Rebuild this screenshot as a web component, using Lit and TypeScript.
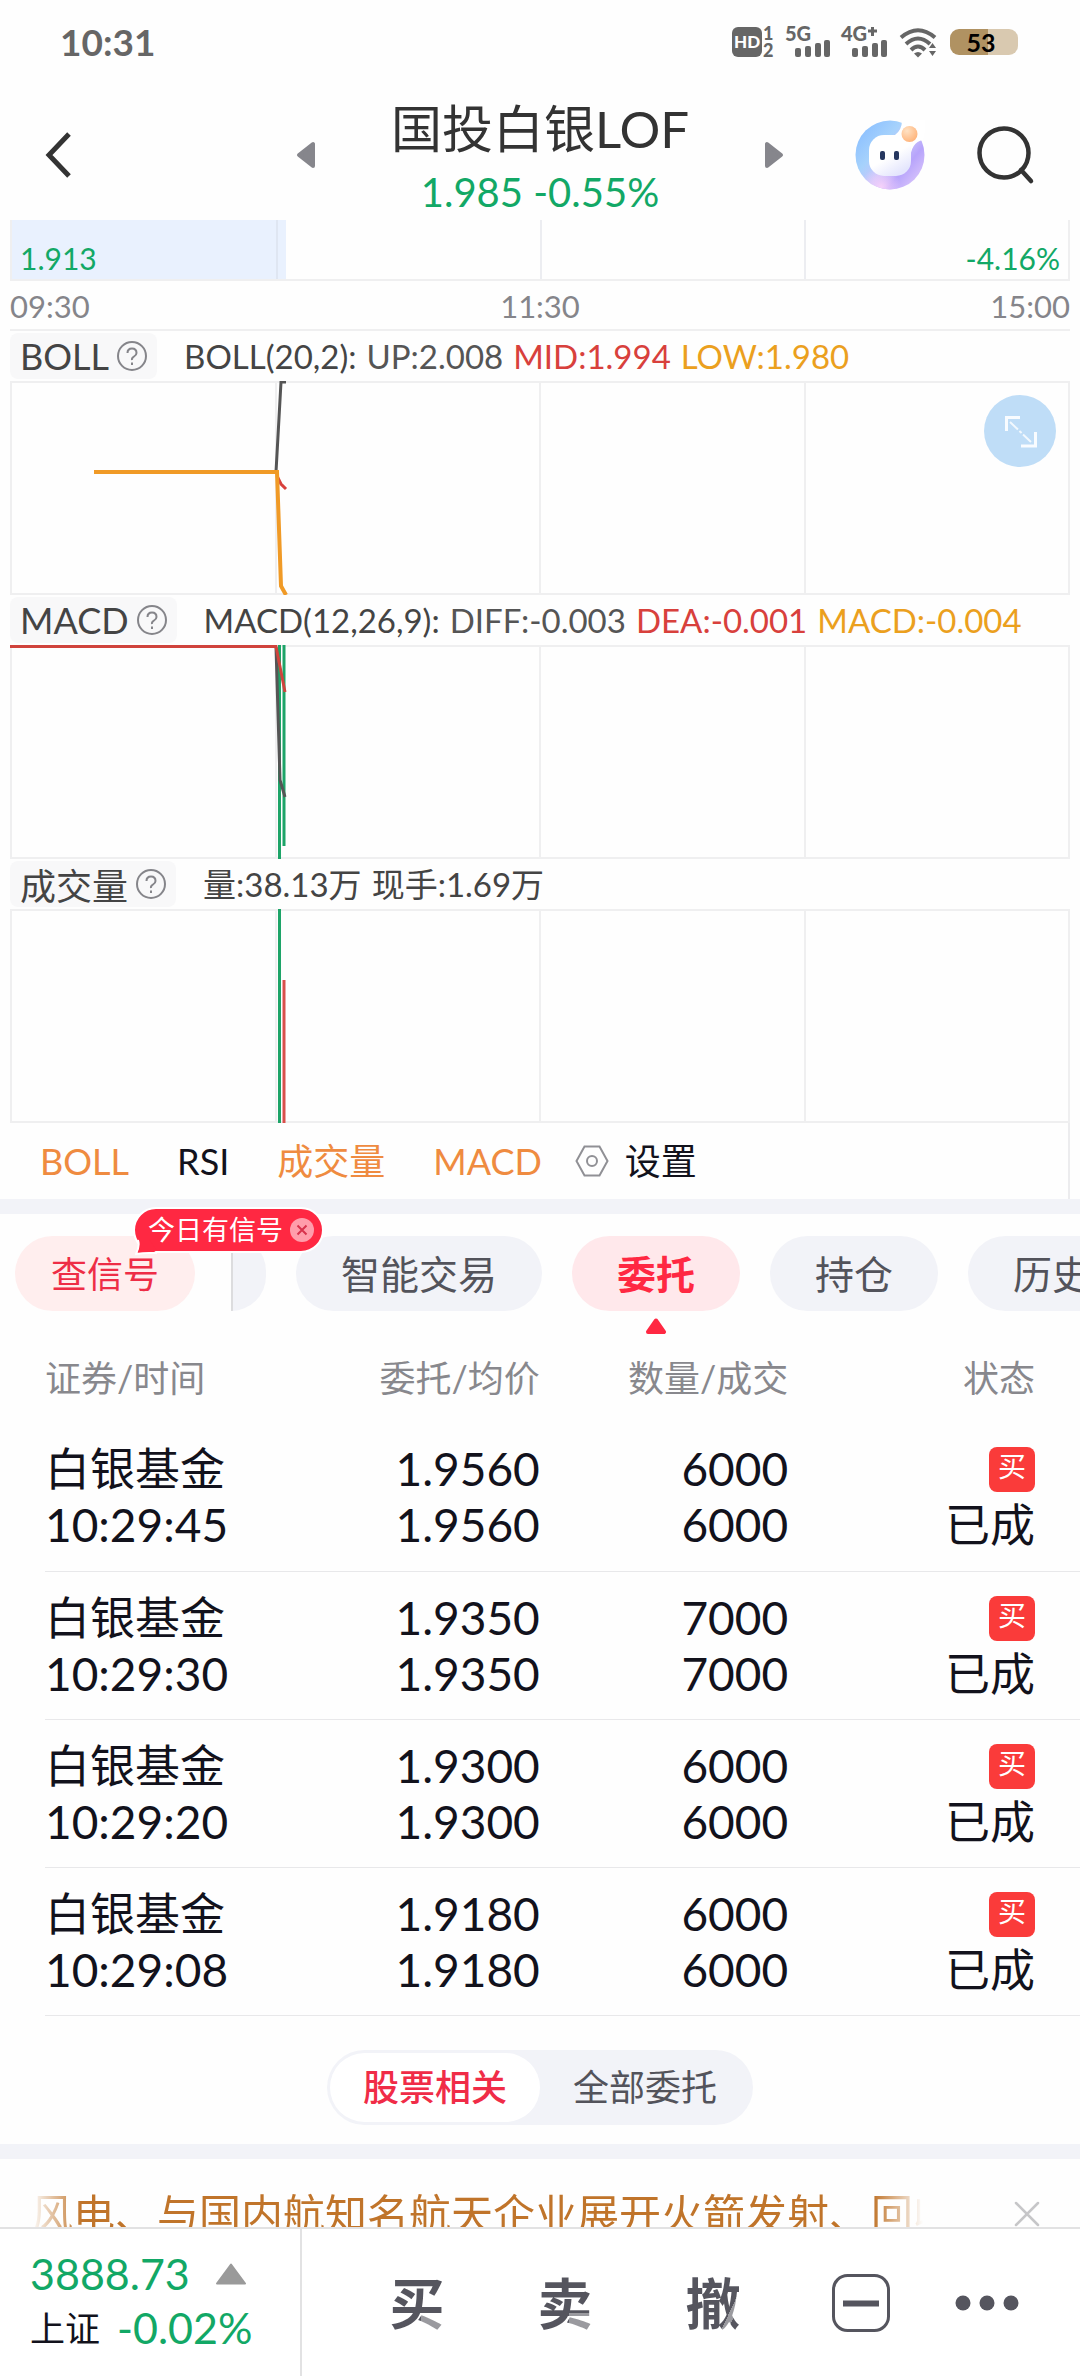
import { LitElement, html, svg, css } from "lit";
import { customElement, property, state } from "lit/decorators.js";
import { classMap } from "lit/directives/class-map.js";

const base = css`
  * {
    box-sizing: border-box;
  }
  button {
    margin: 0;
    padding: 0;
    border: 0;
    background: none;
    color: inherit;
    font: inherit;
    line-height: inherit;
    white-space: nowrap;
    cursor: pointer;
  }
  svg {
    display: block;
    flex: none;
  }
`;

@customElement("status-bar")
class StatusBar extends LitElement {
  static styles = [
    base,
    css`
      :host {
        display: flex;
        align-items: center;
        justify-content: space-between;
        height: 88px;
        padding: 0 62px 4px 60px;
        color: #666;
      }
      .time {
        font-size: 37px;
        font-weight: 700;
        line-height: 48px;
      }
      .icons {
        display: flex;
        align-items: center;
      }
      .battery {
        display: flex;
        align-items: center;
        justify-content: center;
        width: 68px;
        height: 26px;
        margin-left: 12px;
        padding-right: 6px;
        border-radius: 9px;
        background: linear-gradient(90deg, #b09262 56%, #d9c9b0 56%);
        color: #000;
        font-size: 25px;
        font-weight: 700;
        line-height: 26px;
      }
      text {
        font-weight: 900;
        font-size: 20px;
        fill: #666;
      }
      .hd {
        fill: #fff;
        font-size: 17px;
      }
      .sim {
        font-size: 18px;
      }
    `,
  ];

  bars(x: number) {
    return svg`
      <rect x=${x} y="22" width="6" height="9" rx="2" />
      <rect x=${x + 10} y="20" width="6" height="11" rx="2" />
      <rect x=${x + 20} y="17" width="6" height="14" rx="2" />
      <rect x=${x + 29} y="14" width="6" height="17" rx="2" />`;
  }

  render() {
    return html`
      <span class="time">10:31</span>
      <div class="icons">
        <svg width="206" height="48" viewBox="0 -8 206 48" fill="#666" role="img" aria-label="信号">
          <rect x="0" y="1" width="30" height="30" rx="6" />
          <text class="hd" x="2" y="22">HD</text>
          <text class="sim" x="31" y="14">1</text>
          <text class="sim" x="31" y="31">2</text>
          <text x="53" y="15">5G</text>
          ${this.bars(63)}
          <text x="109" y="15">4G</text>
          <path d="M136 5h9M140.500 1v9" stroke="#666" stroke-width="3" />
          ${this.bars(120)}
          <g fill="none" stroke="#666" stroke-width="4">
            <path d="M169 11.500Q186 -3 203 11.500" />
            <path d="M174 18Q186 7 198 18" />
            <path d="M179 24Q186 17 193 24" />
          </g>
          <path d="M182 27.500q4-3 8 0l-4 4zM197 22l3.500-5l3.500 5zM197 25l3.500 5l3.500-5z" />
        </svg>
        <span class="battery">53</span>
      </div>
    `;
  }
}

@customElement("quote-header")
class QuoteHeader extends LitElement {
  static styles = [
    base,
    css`
      :host {
        display: grid;
        grid-template-columns: 1fr minmax(0, 488px) 1fr;
        align-items: center;
        height: 132px;
        color: #333;
      }
      .back {
        justify-self: start;
        padding: 10px 24px 10px 44px;
      }
      .switcher {
        display: flex;
        align-items: center;
        justify-content: space-between;
      }
      .quote {
        padding-top: 8px;
        text-align: center;
        white-space: nowrap;
      }
      .name {
        margin: 0;
        font-size: 51px;
        font-weight: 400;
        line-height: 66px;
      }
      .price {
        color: #12a866;
        font-size: 40px;
        line-height: 60px;
      }
      .tools {
        display: flex;
        align-items: center;
        justify-content: flex-end;
        gap: 52px;
        padding-right: 45px;
      }
    `,
  ];

  render() {
    return html`
      <button class="back" aria-label="返回">
        <svg width="28" height="46" viewBox="0 0 28 46" fill="none" stroke="#333" stroke-width="5">
          <path d="M25 2L5 23L25 44" />
        </svg>
      </button>
      <div class="switcher">
        <button aria-label="上一只">
          <svg width="20" height="28" viewBox="0 0 20 28" fill="#86868c" stroke="#86868c" stroke-width="4" stroke-linejoin="round">
            <path d="M3 14L17 3V25Z" />
          </svg>
        </button>
        <div class="quote">
          <h1 class="name">国投白银LOF</h1>
          <div class="price">1.985 -0.55%</div>
        </div>
        <button aria-label="下一只">
          <svg width="20" height="28" viewBox="0 0 20 28" fill="#86868c" stroke="#86868c" stroke-width="4" stroke-linejoin="round">
            <path d="M17 14L3 3V25Z" />
          </svg>
        </button>
      </div>
      <div class="tools">
        <button aria-label="智能助手">
          <svg width="70" height="70" viewBox="0 0 70 70">
            <defs>
              <linearGradient id="ring" x1="0.100" y1="0.100" x2="0.900" y2="0.800">
                <stop offset="0" stop-color="#8cc0ff" />
                <stop offset="0.350" stop-color="#a6d2fc" />
                <stop offset="0.600" stop-color="#c9c4fb" />
                <stop offset="0.800" stop-color="#b7a4fb" />
                <stop offset="1" stop-color="#d0bcfb" />
              </linearGradient>
              <radialGradient id="glow">
                <stop offset="0" stop-color="#f6d2fa" />
                <stop offset="1" stop-color="#f6d2fa" stop-opacity="0" />
              </radialGradient>
              <radialGradient id="ball" cx="0.350" cy="0.300" r="0.800">
                <stop offset="0" stop-color="#ffe2c4" />
                <stop offset="1" stop-color="#ffb074" />
              </radialGradient>
              <linearGradient id="face" x1="0" y1="0" x2="0.600" y2="1">
                <stop offset="0.600" stop-color="#fff" />
                <stop offset="1" stop-color="#e4e6fd" />
              </linearGradient>
              <clipPath id="disc"><circle cx="35" cy="35" r="34.500" /></clipPath>
            </defs>
            <circle cx="35" cy="35" r="34.500" fill="url(#ring)" />
            <circle cx="26" cy="67" r="20" fill="url(#glow)" clip-path="url(#disc)" />
            <path d="M47 0Q47 10 40 15H30L55 32V40Q56 22 68 20L72 0Z" fill="#fff" />
            <rect x="14" y="15" width="42" height="41" rx="15" fill="url(#face)" />
            <rect x="25" y="31" width="5" height="9" rx="2" fill="#26375f" />
            <rect x="39" y="31" width="5" height="9" rx="2" fill="#26375f" />
            <circle cx="54.500" cy="14" r="8" fill="url(#ball)" />
          </svg>
        </button>
        <button aria-label="搜索">
          <svg width="58" height="60" viewBox="0 0 58 60" fill="none" stroke="#333" stroke-width="4.500" stroke-linecap="round">
            <circle cx="27" cy="28" r="24.500" />
            <path d="M44 45L54 56" />
          </svg>
        </button>
      </div>
    `;
  }
}

type Legend = { text: string; tone: string };

@customElement("indicator-panel")
class IndicatorPanel extends LitElement {
  @property() label = "";
  @property({ attribute: false }) legend: Legend[] = [];
  @property({ attribute: false }) plot: unknown = null;
  @property({ type: Boolean }) expandable = false;

  static styles = [
    base,
    css`
      :host {
        display: block;
      }
      .head {
        display: flex;
        align-items: center;
        gap: 27px;
        height: 50px;
        white-space: nowrap;
      }
      .label {
        display: flex;
        align-items: center;
        gap: 8px;
        height: 46px;
        padding: 0 10px;
        border-radius: 8px;
        background: #f8f8f9;
        color: #444;
        font-size: 36px;
      }
      .legend {
        display: flex;
        gap: 10px;
        color: #444;
        font-size: 33px;
        line-height: 48px;
      }
      .up {
        color: #555;
      }
      .red {
        color: #d8403c;
      }
      .gold {
        color: #eba01e;
      }
      .frame {
        position: relative;
        height: 214px;
        border: 2px solid #efeff0;
      }
      .plot {
        position: absolute;
        inset: -2px;
        width: calc(100% + 4px);
        height: 214px;
      }
      .expand {
        position: absolute;
        top: 12px;
        right: 12px;
      }
    `,
  ];

  render() {
    return html`
      <div class="head">
        <button class="label">
          ${this.label}
          <svg width="30" height="30" viewBox="0 0 30 30" fill="none" stroke="#85858a" stroke-width="2">
            <circle cx="15" cy="15" r="14" />
            <path d="M10.500 12Q10.500 7.500 15 7.500T19.500 12Q19.500 14 17 15.500T15 19" />
            <path d="M15 21.500v2.500" />
          </svg>
        </button>
        <div class="legend">
          ${this.legend.map((l) => html`<span class=${l.tone}>${l.text}</span>`)}
        </div>
      </div>
      <div class="frame">
        <svg class="plot" viewBox="0 0 1060 214" preserveAspectRatio="none" fill="none">
          <path d="M266 0V214M530 0V214M795 0V214" stroke="#efeff0" stroke-width="2" />
          ${this.plot}
        </svg>
        ${this.expandable
          ? html`<button class="expand" aria-label="全屏">
              <svg width="72" height="72" viewBox="0 0 72 72" fill="none" stroke="#fff">
                <circle cx="36" cy="36" r="36" fill="#bfddf7" stroke="none" />
                <path d="M22.500 36V22.500H36M37 51H51.500V37" stroke-width="3" opacity="0.900" />
                <path d="M26 27L47 47" stroke-width="2" stroke-dasharray="11 2 3 2" opacity="0.800" />
              </svg>
            </button>`
          : null}
      </div>
    `;
  }
}

const bollPlot = svg`
  <path d="M266 91L271 1H276" stroke="#555" stroke-width="3" />
  <path d="M267 95L271 103L276 108" stroke="#d8403c" stroke-width="3" />
  <path d="M84 91H267L271 205L276 214" stroke="#f09a26" stroke-width="4" />`;

const macdPlot = svg`
  <path d="M269.500 0V214M274 0V201" stroke="#1da468" stroke-width="3" />
  <path d="M266 2L270 135L275 152" stroke="#555" stroke-width="3" />
  <path d="M0 1.500H266L275 47" stroke="#d0433c" stroke-width="3" />`;

const volumePlot = svg`
  <path d="M269.500 0V214" stroke="#1da468" stroke-width="3" />
  <path d="M274 71V214" stroke="#d8504c" stroke-width="3" />`;

@customElement("chart-section")
class ChartSection extends LitElement {
  @state() active = new Set(["BOLL", "成交量", "MACD"]);

  static styles = [
    base,
    css`
      :host {
        display: block;
        padding: 0 10px;
      }
      .trend {
        display: grid;
        grid-template-columns: repeat(4, 1fr);
        height: 61px;
        border: 2px solid #efeff0;
        border-top: 0;
        background: linear-gradient(90deg, #e9f1fe 274px, transparent 274px);
        color: #12a866;
        font-size: 30px;
        line-height: 36px;
      }
      .trend span {
        display: flex;
        align-items: flex-end;
        padding: 0 8px 3px;
      }
      .trend span + span {
        border-left: 2px solid #ecedf1;
      }
      .trend span:nth-child(2) {
        border-left-color: #dfe6f2;
      }
      .trend .low {
        justify-content: flex-end;
      }
      .axis {
        display: flex;
        justify-content: space-between;
        height: 50px;
        border-bottom: 2px solid #efeff0;
        color: #85858a;
        font-size: 31px;
        line-height: 50px;
      }
      .switches {
        display: flex;
        align-items: center;
        gap: 48px;
        height: 76px;
        padding-left: 30px;
        border-right: 2px solid #ececee;
        color: #12121c;
        font-size: 36px;
        line-height: 48px;
      }
      .on {
        color: #ef8b40;
      }
      .settings {
        display: flex;
        align-items: center;
        gap: 16px;
      }
      .tail {
        display: flex;
        gap: 33px;
      }
    `,
  ];

  toggle(name: string) {
    const next = new Set(this.active);
    next.has(name) ? next.delete(name) : next.add(name);
    this.active = next;
  }

  item(name: string) {
    const on = this.active.has(name);
    return html`<button class=${classMap({ on })} aria-pressed=${on} @click=${() => this.toggle(name)}>${name}</button>`;
  }

  render() {
    return html`
      <div class="trend"><span>1.913</span><span></span><span></span><span class="low">-4.16%</span></div>
      <div class="axis"><span>09:30</span><span>11:30</span><span>15:00</span></div>
      <indicator-panel
        label="BOLL"
        expandable
        .legend=${[
          { text: "BOLL(20,2):", tone: "" },
          { text: "UP:2.008", tone: "up" },
          { text: "MID:1.994", tone: "red" },
          { text: "LOW:1.980", tone: "gold" },
        ]}
        .plot=${bollPlot}
      ></indicator-panel>
      <indicator-panel
        label="MACD"
        .legend=${[
          { text: "MACD(12,26,9):", tone: "" },
          { text: "DIFF:-0.003", tone: "up" },
          { text: "DEA:-0.001", tone: "red" },
          { text: "MACD:-0.004", tone: "gold" },
        ]}
        .plot=${macdPlot}
      ></indicator-panel>
      <indicator-panel
        label="成交量"
        .legend=${[
          { text: "量:38.13万", tone: "" },
          { text: "现手:1.69万", tone: "" },
        ]}
        .plot=${volumePlot}
      ></indicator-panel>
      <div class="switches">
        ${this.item("BOLL")} ${this.item("RSI")} ${this.item("成交量")}
        <div class="tail">
          ${this.item("MACD")}
          <button class="settings">
            <svg width="34" height="32" viewBox="0 0 34 32" fill="none" stroke="#909095" stroke-width="2">
              <path d="M9.500 1.500H24.500L32.500 16L24.500 30.500H9.500L1.500 16Z" />
              <circle cx="17" cy="16" r="5" />
            </svg>
            设置
          </button>
        </div>
      </div>
    `;
  }
}

@customElement("trade-tabs")
class TradeTabs extends LitElement {
  @state() current = "委托";
  @state() hintOpen = true;

  static styles = [
    base,
    css`
      :host {
        display: flex;
        align-items: flex-start;
        position: relative;
        height: 120px;
        padding: 22px 0 0 15px;
      }
      .signal {
        height: 75px;
        padding: 0 36px 4px;
        border-radius: 38px;
        background: #ffeeee;
        color: #ee2d46;
        font-size: 36px;
      }
      .scroller {
        flex: 1;
        min-width: 0;
        display: flex;
        gap: 30px;
        height: 98px;
        margin-left: 36px;
        overflow: hidden;
      }
      .edge {
        flex: none;
        width: 35px;
        height: 75px;
        border-left: 2px solid #dcdcde;
        border-radius: 0 38px 38px 0;
        background: #f2f3f8;
      }
      .tab {
        flex: none;
        display: flex;
        flex-direction: column;
        align-items: center;
        gap: 7px;
      }
      .pill {
        height: 75px;
        padding: 0 45px 4px;
        border-radius: 38px;
        background: #f2f3f8;
        color: #53535b;
        font-size: 39px;
      }
      .pill.on {
        background: #ffe8eb;
        color: #ff2842;
        font-weight: 700;
      }
      .hint {
        position: absolute;
        top: -7px;
        left: 133px;
        display: flex;
        align-items: center;
        gap: 7px;
        height: 46px;
        padding: 0 8px 0 13px;
        border: 2px solid #fff;
        border-radius: 23px;
        background: #ff2842;
        color: #fff;
        font-size: 27px;
        line-height: 42px;
        white-space: nowrap;
      }
      .tip {
        position: absolute;
        left: 0;
        bottom: -5px;
      }
    `,
  ];

  render() {
    const tabs = ["智能交易", "委托", "持仓", "历史持仓"];
    return html`
      <button class="signal">查信号</button>
      <div class="scroller" role="tablist">
        <span class="edge"></span>
        ${tabs.map((name) => {
          const on = name === this.current;
          return html`<div class="tab">
            <button class=${classMap({ pill: true, on })} role="tab" aria-selected=${on} @click=${() => (this.current = name)}>${name}</button>
            ${on
              ? html`<svg width="22" height="16" viewBox="0 0 22 16" fill="#ff2842" stroke="#ff2842" stroke-width="4" stroke-linejoin="round">
                  <path d="M11 2.500L19 14H3Z" />
                </svg>`
              : null}
          </div>`;
        })}
      </div>
      ${this.hintOpen
        ? html`<div class="hint">
            <svg class="tip" width="26" height="18" viewBox="0 0 26 18">
              <path d="M3 2Q5 8 1 16Q8 15 14 15H22" fill="#ff2842" stroke="#fff" stroke-width="2" />
              <path d="M4 1L6 6Q5 11 3 14Q9 13 22 13L14 1Z" fill="#ff2842" />
            </svg>
            今日有信号
            <button aria-label="关闭" @click=${() => (this.hintOpen = false)}>
              <svg width="24" height="24" viewBox="0 0 24 24">
                <circle cx="12" cy="12" r="12" fill="#ff9dab" />
                <path d="M7.500 7.500L16.500 16.500M16.500 7.500L7.500 16.500" stroke="#d8324c" stroke-width="2" />
              </svg>
            </button>
          </div>`
        : null}
    `;
  }
}

@customElement("order-list")
class OrderList extends LitElement {
  @state() scope = "股票相关";

  static styles = [
    base,
    css`
      :host {
        display: block;
      }
      .indent {
        padding-left: 45px;
      }
      table {
        width: 100%;
        border-collapse: collapse;
        table-layout: fixed;
        color: #12121c;
        font-size: 46px;
        line-height: 56px;
      }
      th,
      td {
        padding: 0 2px 0 0;
        text-align: right;
        vertical-align: top;
        white-space: nowrap;
      }
      th {
        height: 89px;
        padding-top: 20px;
        color: #88888d;
        font-size: 36px;
        font-weight: 400;
        line-height: 48px;
      }
      td {
        height: 148px;
        padding-top: 18px;
        border-bottom: 1px solid #e8e8ea;
      }
      th:first-child,
      td:first-child {
        text-align: left;
      }
      th:last-child,
      td:last-child {
        padding-right: 45px;
      }
      .cell {
        display: flex;
        flex-direction: column;
      }
      .cjk {
        font-size: 45px;
      }
      .state {
        align-items: flex-end;
      }
      .side {
        width: 46px;
        height: 45px;
        margin: 6px 0 5px;
        border-radius: 8px;
        background: #fa3b3a;
        color: #fff;
        font-size: 28px;
        line-height: 38px;
        text-align: center;
      }
      .scope {
        display: flex;
        width: fit-content;
        margin: 34px auto 19px;
        padding: 3px;
        border-radius: 38px;
        background: #f2f3f8;
        color: #53535b;
        font-size: 36px;
      }
      .option {
        height: 69px;
        padding: 0 33px 4px;
        border-radius: 35px;
      }
      .option.on {
        background: #fff;
        color: #f02c47;
        font-weight: 500;
      }
    `,
  ];

  render() {
    const orders = [
      ["10:29:45", "1.9560", "6000"],
      ["10:29:30", "1.9350", "7000"],
      ["10:29:20", "1.9300", "6000"],
      ["10:29:08", "1.9180", "6000"],
    ];
    return html`
      <div class="indent">
        <table>
          <colgroup>
            <col width="24%" />
            <col width="24%" />
            <col width="24%" />
            <col width="28%" />
          </colgroup>
          <thead>
            <tr>
              <th scope="col">证券/时间</th>
              <th scope="col">委托/均价</th>
              <th scope="col">数量/成交</th>
              <th scope="col">状态</th>
            </tr>
          </thead>
          <tbody>
            ${orders.map(
              ([time, price, amount]) => html`<tr>
                <td><div class="cell"><span class="cjk">白银基金</span><span>${time}</span></div></td>
                <td><div class="cell"><span>${price}</span><span>${price}</span></div></td>
                <td><div class="cell"><span>${amount}</span><span>${amount}</span></div></td>
                <td><div class="cell state"><span class="side">买</span><span class="cjk">已成</span></div></td>
              </tr>`
            )}
          </tbody>
        </table>
      </div>
      <div class="scope">
        ${["股票相关", "全部委托"].map((name) => {
          const on = name === this.scope;
          return html`<button class=${classMap({ option: true, on })} aria-pressed=${on} @click=${() => (this.scope = name)}>${name}</button>`;
        })}
      </div>
    `;
  }
}

@customElement("news-ticker")
class NewsTicker extends LitElement {
  static styles = [
    base,
    css`
      :host {
        display: flex;
        align-items: center;
        justify-content: space-between;
        padding: 27px 39px 28px 31px;
      }
      .text {
        flex: 1;
        min-width: 0;
        overflow: hidden;
        color: #c0742a;
        font-size: 42px;
        line-height: 56px;
        white-space: nowrap;
        mask-image: linear-gradient(90deg, transparent, #000 50px, #000 calc(100% - 50px), transparent);
      }
      .close {
        flex: none;
        margin-left: 90px;
      }
    `,
  ];

  render() {
    return html`
      <div class="text">风电、与国内航知名航天企业展开火箭发射、回收</div>
      <button class="close" aria-label="关闭">
        <svg width="28" height="28" viewBox="0 0 28 28" stroke="#c6c6c8" stroke-width="2.500" stroke-linecap="round">
          <path d="M3 3L25 25M25 3L3 25" />
        </svg>
      </button>
    `;
  }
}

@customElement("action-bar")
class ActionBar extends LitElement {
  static styles = [
    base,
    css`
      :host {
        display: flex;
        height: 149px;
        border-top: 2px solid #e2e2e3;
        background: #fff;
      }
      .index {
        flex: none;
        display: flex;
        flex-direction: column;
        width: 302px;
        padding: 18px 0 0 30px;
        border-right: 2px solid #e2e2e3;
        color: #12a866;
        font-size: 43px;
        line-height: 54px;
        white-space: nowrap;
      }
      .line {
        display: flex;
        align-items: center;
      }
      .value {
        gap: 26px;
      }
      .change {
        gap: 17px;
      }
      .market {
        color: #12121c;
        font-size: 35px;
      }
      .actions {
        flex: 1;
        display: grid;
        grid-template-columns: 148fr 148fr 148fr 148fr 104fr;
        place-items: center;
        padding: 0 41px;
      }
      .action {
        background-color: #55555e;
        background-clip: text;
        -webkit-background-clip: text;
        color: transparent;
        font-size: 55px;
        font-weight: 700;
        line-height: 60px;
      }
      .trade {
        background-image: linear-gradient(#9a9a9f, #9a9a9f);
        background-position: right bottom;
        background-size: 42% 33%;
        background-repeat: no-repeat;
      }
      .cancel {
        background-image: linear-gradient(115deg, transparent 73%, #9a9a9f 73%, #9a9a9f 82%, transparent 82%);
        background-position: right bottom;
        background-size: 100% 62%;
        background-repeat: no-repeat;
      }
    `,
  ];

  render() {
    return html`
      <div class="index">
        <div class="line value">
          <span>3888.73</span>
          <svg width="30" height="22" viewBox="0 0 30 22" fill="#9a9a9a" stroke="#9a9a9a" stroke-width="2" stroke-linejoin="round">
            <path d="M15 1.500L29 20.500H1Z" />
          </svg>
        </div>
        <div class="line change"><span class="market">上证</span><span>-0.02%</span></div>
      </div>
      <div class="actions">
        <button class="action trade">买</button>
        <button class="action trade">卖</button>
        <button class="action cancel">撤</button>
        <button aria-label="收起">
          <svg width="58" height="58" viewBox="0 0 58 58" fill="none" stroke="#55555e">
            <rect x="1.500" y="1.500" width="55" height="55" rx="14" stroke-width="3" />
            <path d="M11 29.500H47" stroke-width="6" />
          </svg>
        </button>
        <button aria-label="更多">
          <svg width="64" height="16" viewBox="0 0 64 16" fill="#55555e">
            <circle cx="8" cy="8" r="7.500" />
            <circle cx="32" cy="8" r="7.500" />
            <circle cx="56" cy="8" r="7.500" />
          </svg>
        </button>
      </div>
    `;
  }
}

@customElement("app-root")
class AppRoot extends LitElement {
  static styles = [
    base,
    css`
      :host {
        display: flex;
        flex-direction: column;
        height: 100vh;
        overflow: hidden;
        background: #fefefe;
        font-family: Lato, "Noto Sans CJK SC", sans-serif;
      }
      main {
        flex: 1;
        min-height: 0;
        overflow: hidden;
      }
      .divider {
        height: 15px;
        background: #f2f3f8;
      }
      status-bar,
      quote-header,
      action-bar {
        flex: none;
      }
    `,
  ];

  render() {
    return html`
      <status-bar></status-bar>
      <quote-header></quote-header>
      <main>
        <chart-section></chart-section>
        <div class="divider"></div>
        <trade-tabs></trade-tabs>
        <order-list></order-list>
        <div class="divider"></div>
        <news-ticker></news-ticker>
      </main>
      <action-bar></action-bar>
    `;
  }
}
